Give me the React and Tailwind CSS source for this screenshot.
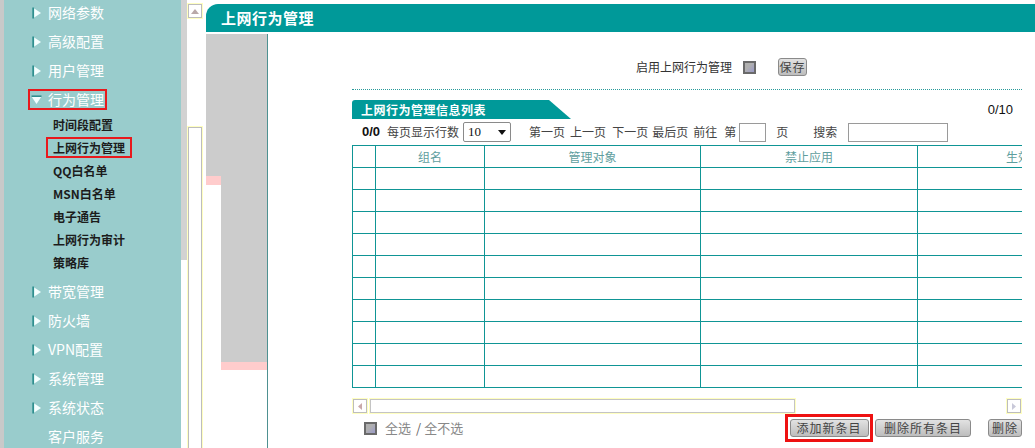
import React from 'react';

const topItems = ['网络参数', '高级配置', '用户管理'];
const subItems = ['时间段配置', '上网行为管理', 'QQ白名单', 'MSN白名单', '电子通告', '上网行为审计', '策略库'];
const bottomItems = ['带宽管理', '防火墙', 'VPN配置', '系统管理', '系统状态'];

const RightArrow = () => (
  <svg width="10" height="12" viewBox="0 0 10 12">
    <polygon points="1.5,1 9,6 1.5,11" fill="#f4ffff" />
    <line x1="1.2" y1="0.5" x2="1.2" y2="11.5" stroke="#2f8f8f" strokeWidth="1.8" />
  </svg>
);

const DownArrow = () => (
  <svg width="11" height="10" viewBox="0 0 11 10">
    <polygon points="0.5,1.5 10.5,1.5 5.5,9" fill="#f4ffff" />
    <line x1="0.5" y1="1.2" x2="10.5" y2="1.2" stroke="#2f8f8f" strokeWidth="1.6" />
  </svg>
);

const Checkbox = () => (
  <span className="inline-block w-[13px] h-[13px] border-2 border-[#6a6a6a] bg-[linear-gradient(135deg,#b0b0b0_40%,#9a9ac8)]" />
);

const GreyButton = ({ children, className }) => (
  <button className={"h-[18px] rounded-[3px] border border-[#8a8a8a] bg-[linear-gradient(#e2e2e2,#bdbdbd)] text-[12px] text-[#444] leading-none tracking-[1px] " + className}>
    {children}
  </button>
);

const rows = Array.from({ length: 10 });

const App = () => {
  return (
    <div className="w-[1035px] h-[448px] overflow-hidden flex bg-white" style={{ fontFamily: '"Noto Sans CJK SC", "Liberation Sans", sans-serif' }}>
      {/* 左侧菜单 */}
      <div className="w-[181px] h-full bg-[#99cccc] border-l-4 border-[#c9c9c9] shrink-0">
        <div className="-mt-[2px] flex flex-col">
          {topItems.map((t) => (
            <div key={t} className="h-[29px] flex items-center pl-[28px]">
              <RightArrow />
              <span className="ml-[6px] text-[14px] text-white">{t}</span>
            </div>
          ))}
          <div className="h-[29px] flex items-center">
            <div className="ml-[24px] w-[79px] h-[21px] border-2 border-[#e8191c] flex items-center pl-[1px]">
              <DownArrow />
              <span className="ml-[6px] text-[14px] text-white">行为管理</span>
            </div>
          </div>
          <div className="-mt-[1px] flex flex-col">
            {subItems.map((t) =>
              t === '上网行为管理' ? (
                <div key={t} className="h-[23px] flex items-center">
                  <div className="ml-[42px] w-[86px] h-[21px] border-2 border-[#e8191c] flex items-center pl-[5px]">
                    <span className="text-[12px] font-bold text-[#1c1c1c]">{t}</span>
                  </div>
                </div>
              ) : (
                <div key={t} className="h-[23px] flex items-center pl-[49px]">
                  <span className="text-[12px] font-bold text-[#1c1c1c]">{t}</span>
                </div>
              )
            )}
          </div>
          <div className="mt-[3px] flex flex-col">
            {bottomItems.map((t) => (
              <div key={t} className="h-[29px] flex items-center pl-[28px]">
                <RightArrow />
                <span className="ml-[6px] text-[14px] text-white">{t}</span>
              </div>
            ))}
            <div className="h-[29px] flex items-center pl-[44px]">
              <span className="text-[14px] text-white">客户服务</span>
            </div>
          </div>
        </div>
      </div>

      {/* 菜单滚动条 */}
      <div className="w-[6px] h-full shrink-0 flex flex-col">
        <div className="h-[260px] bg-[#d2d2d2]" />
      </div>
      <div className="w-[19px] h-full shrink-0 bg-white pt-[3px]">
        <div className="w-[16px] h-[16px] border border-[#ffffc0]">
          <div className="w-full h-full border border-[#bdbdbd] flex items-center justify-center">
            <svg width="8" height="5" viewBox="0 0 8 5"><polygon points="0,5 8,5 4,0" fill="#b9a9a9" /></svg>
          </div>
        </div>
        <div className="mt-[107px] w-[16px] h-[340px] border border-[#ffffc0]">
          <div className="w-full h-full border border-[#bdbdbd] bg-white" />
        </div>
      </div>

      {/* 主区域 */}
      <div className="flex-1 flex flex-col min-w-0">
        <div className="mt-[4px] h-[28px] bg-[#009999] rounded-tl-[12px] flex items-center pl-[15px]">
          <span className="text-[15px] font-bold text-white tracking-[0.5px]">上网行为管理</span>
        </div>
        <div className="mt-[2px] flex flex-1 min-h-0">
          <div className="w-[61px] flex shrink-0">
            <div className="w-[15px] flex flex-col">
              <div className="h-[142px] bg-[#cccccc]" />
              <div className="h-[9px] bg-[#ffcccc]" />
            </div>
            <div className="w-[46px] flex flex-col">
              <div className="h-[328px] bg-[#cccccc]" />
              <div className="h-[8px] bg-[#ffcccc]" />
            </div>
          </div>
          <div className="w-px bg-[#4e9191] shrink-0" />

          <div className="flex-1 pl-[84px] min-w-0">
            <div className="w-[670px] text-[12px]">
              {/* 启用 */}
              <div className="mt-[24px] h-[18px] flex items-center pl-[284px]">
                <span className="text-[#333]">启用上网行为管理</span>
                <span className="ml-[11px] flex"><Checkbox /></span>
                <GreyButton className="ml-[22px] w-[29px]">保存</GreyButton>
              </div>
              <div className="mt-[13px] border-t border-dotted border-[#2a9a9a]" />

              {/* 标签 */}
              <div className="mt-[10px] h-[19px] flex items-center justify-between">
                <div className="h-[19px] w-[219px] bg-[#009999] rounded-tl-[3px] [clip-path:polygon(0_0,197px_0,219px_100%,0_100%)] flex items-center pl-[9px]">
                  <span className="text-[12px] font-bold text-white tracking-[0.5px]">上网行为管理信息列表</span>
                </div>
                <span className="mr-[9px] text-[13px] text-[#111]" style={{ fontFamily: '"Liberation Sans", sans-serif' }}>0/10</span>
              </div>

              {/* 分页 */}
              <div className="mt-[3px] h-[20px] flex items-center text-[#444]">
                <span className="ml-[10px] text-[13px] text-[#111] font-bold" style={{ fontFamily: '"Liberation Sans", sans-serif' }}>0/0</span>
                <span className="ml-[7px]">每页显示行数</span>
                <div className="ml-[4px] w-[48px] h-[20px] border border-[#8a8a8a] rounded-[2px] bg-white flex items-center justify-between px-[4px]">
                  <span className="text-[13px] text-[#111]" style={{ fontFamily: '"Liberation Serif", serif' }}>10</span>
                  <svg width="8" height="5" viewBox="0 0 8 5"><polygon points="0,0 8,0 4,5" fill="#111" /></svg>
                </div>
                <span className="ml-[18px]">第一页</span>
                <span className="ml-[5px]">上一页</span>
                <span className="ml-[6px]">下一页</span>
                <span className="ml-[4px]">最后页</span>
                <span className="ml-[5px]">前往</span>
                <span className="ml-[7px]">第</span>
                <span className="ml-[3px] w-[27px] h-[19px] border border-[#9a9a9a] bg-white" />
                <span className="ml-[10px]">页</span>
                <span className="ml-[25px]">搜索</span>
                <span className="ml-[11px] w-[100px] h-[19px] border border-[#9a9a9a] bg-white" />
              </div>

              {/* 表格 */}
              <div className="mt-[3px] w-[670px] overflow-hidden">
                <table className="border-collapse table-fixed w-[900px]">
                  <colgroup>
                    <col className="w-[23px]" />
                    <col className="w-[109px]" />
                    <col className="w-[216px]" />
                    <col className="w-[217px]" />
                    <col className="w-[335px]" />
                  </colgroup>
                  <thead>
                    <tr className="h-[22px]">
                      <th className="border border-[#0f9595] font-normal" />
                      <th className="border border-[#0f9595] font-normal text-[#5f9e9e] text-[12px]">组名</th>
                      <th className="border border-[#0f9595] font-normal text-[#5f9e9e] text-[12px]">管理对象</th>
                      <th className="border border-[#0f9595] font-normal text-[#5f9e9e] text-[12px]">禁止应用</th>
                      <th className="border border-[#0f9595] font-normal text-[#5f9e9e] text-[12px] text-left pl-[88px]">生效时间</th>
                    </tr>
                  </thead>
                  <tbody>
                    {rows.map((_, i) => (
                      <tr key={i} className="h-[22px]">
                        <td className="border border-[#0f9595]" />
                        <td className="border border-[#0f9595]" />
                        <td className="border border-[#0f9595]" />
                        <td className="border border-[#0f9595]" />
                        <td className="border border-[#0f9595]" />
                      </tr>
                    ))}
                  </tbody>
                </table>
              </div>

              {/* 水平滚动条 */}
              <div className="mt-[10px] h-[16px] flex items-stretch">
                <div className="w-[16px] border border-[#ffffc0]">
                  <div className="w-full h-full border border-[#bdbdbd] flex items-center justify-center">
                    <svg width="4" height="7" viewBox="0 0 4 7"><polygon points="4,0 4,7 0,3.5" fill="#c9a9a9" /></svg>
                  </div>
                </div>
                <div className="ml-[1px] w-[427px] border border-[#ffffc0]">
                  <div className="w-full h-full border border-[#c4c4c4] bg-white" />
                </div>
                <div className="flex-1" />
                <div className="w-[16px] border border-[#ffffc0]">
                  <div className="w-full h-full border border-[#bdbdbd] flex items-center justify-center">
                    <svg width="4" height="7" viewBox="0 0 4 7"><polygon points="0,0 0,7 4,3.5" fill="#c9c9d9" /></svg>
                  </div>
                </div>
              </div>

              {/* 底部操作 */}
              <div className="h-[28px] flex items-center">
                <span className="ml-[12px] flex"><Checkbox /></span>
                <span className="ml-[8px] text-[13px] text-[#888]">全选</span>
                <span className="ml-[5px] text-[13px] text-[#666]">/</span>
                <span className="ml-[3px] text-[13px] text-[#888]">全不选</span>
                <div className="ml-auto flex items-center">
                  <div className="w-[88px] h-[28px] border-[3px] border-[#ee1111] flex items-center justify-center">
                    <GreyButton className="w-[79px]">添加新条目</GreyButton>
                  </div>
                  <GreyButton className="ml-[2px] w-[96px]">删除所有条目</GreyButton>
                  <GreyButton className="ml-[17px] w-[34px]">删除</GreyButton>
                </div>
              </div>
            </div>
          </div>
        </div>
      </div>
    </div>
  );
};

export default App;
